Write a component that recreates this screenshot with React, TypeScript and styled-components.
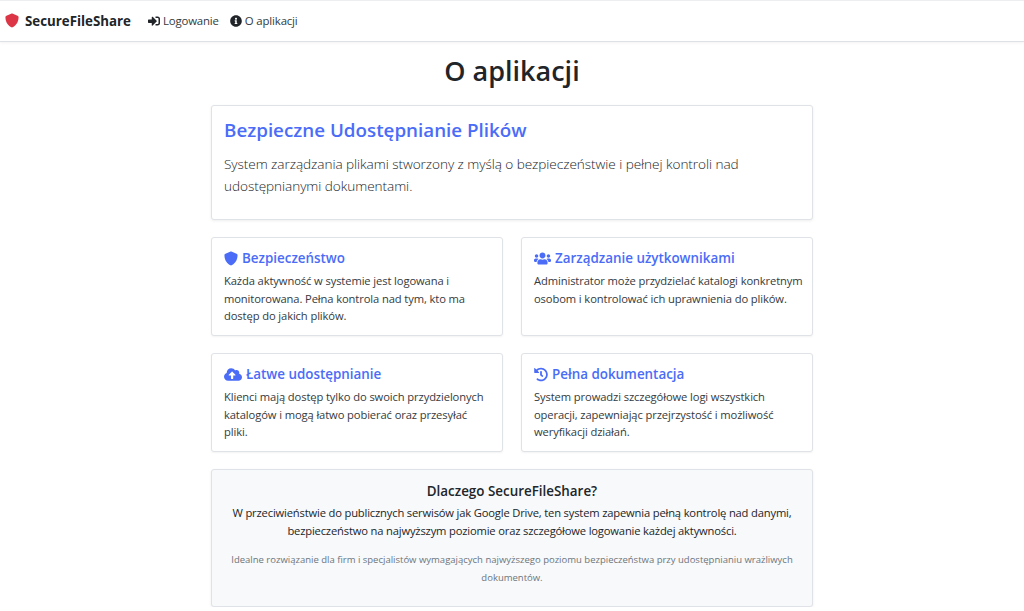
import React from "react";
import styled, { createGlobalStyle } from "styled-components";
import { FaCloudUploadAlt, FaHistory, FaInfoCircle, FaSignInAlt, FaUsers } from "react-icons/fa";
import { FaShield } from "react-icons/fa6";

const GlobalStyle = createGlobalStyle`
  html, body { margin: 0; padding: 0; background: #fff; }
  body {
    font-family: "Open Sans", "Noto Sans", "Liberation Sans", sans-serif;
    color: #212529;
    overflow: hidden;
  }
`;

const Navbar = styled.nav`
  height: 42px;
  box-sizing: border-box;
  border-top: 1px solid #eceef0;
  border-bottom: 1px solid #dee2e6;
  box-shadow: 0 1px 3px rgba(0, 0, 0, 0.05);
  display: flex;
  align-items: center;
  padding: 0 0 1px 5px;
`;

const Brand = styled.a`
  display: flex;
  align-items: center;
  gap: 6px;
  font-size: 13.3px;
  font-weight: 700;
  color: #212529;
  margin-right: 17px;
  svg { color: #dc3545; width: 14px; height: 15px; }
`;

const NavLink = styled.a`
  display: flex;
  align-items: center;
  gap: 3px;
  font-size: 11.4px;
  letter-spacing: -0.15px;
  color: #343a40;
  margin-right: 11px;
  svg { color: #212529; width: 12px; height: 12px; }
`;

const Main = styled.main`
  width: 602px;
  margin: 0 auto;
`;

const PageTitle = styled.h1`
  margin: 10px 0 15px;
  height: 38px;
  line-height: 38px;
  font-size: 27px;
  font-weight: 600;
  text-align: center;
  color: #212529;
`;

const Card = styled.section`
  box-sizing: border-box;
  background: #fff;
  border: 1px solid #dfe2e6;
  border-radius: 3px;
  box-shadow: 0 1px 3px rgba(0, 0, 0, 0.07);
`;

const HeroCard = styled(Card)`
  height: 115px;
  padding: 11px 12px 0;
  margin-bottom: 17px;
`;

const HeroTitle = styled.h2`
  margin: 0 0 10px;
  font-size: 18.8px;
  line-height: 26px;
  font-weight: 600;
  color: #4a6cf7;
`;

const Lead = styled.p`
  margin: 0;
  font-size: 13.6px;
  letter-spacing: -0.06px;
  line-height: 22px;
  font-weight: 300;
  color: #212529;
`;

const FeatureGrid = styled.div`
  display: grid;
  grid-template-columns: 292px 292px;
  grid-auto-rows: 99px;
  column-gap: 18px;
  row-gap: 17px;
  margin-bottom: 17px;
`;

const FeatureCard = styled(Card)`
  padding: 11px 6px 0 12px;
  box-shadow: 0 1px 2px rgba(0, 0, 0, 0.05);
`;

const FeatureTitle = styled.h3<{ $iconWidth: number }>`
  display: flex;
  align-items: center;
  gap: 4px;
  margin: 0 0 4px;
  font-size: 13.4px;
  line-height: 19px;
  font-weight: 600;
  color: #4a6cf7;
  svg { flex: none; width: ${(p) => p.$iconWidth}px; height: 15px; }
`;

const FeatureText = styled.p`
  margin: 0;
  font-size: 11.2px;
  letter-spacing: -0.11px;
  line-height: 17.5px;
  color: #343a40;
  white-space: pre-line;
`;

const WhyCard = styled(Card)`
  height: 138px;
  padding: 11px 12px 0;
  background: #f8f9fa;
  text-align: center;
`;

const WhyTitle = styled.h4`
  margin: 0 0 3px;
  font-size: 13.4px;
  line-height: 20px;
  font-weight: 600;
  color: #212529;
`;

const WhyText = styled.p`
  margin: 0 0 12px;
  font-size: 11.2px;
  letter-spacing: -0.17px;
  line-height: 17.5px;
  color: #212529;
`;

const WhyNote = styled.p`
  margin: 0;
  font-size: 9.5px;
  line-height: 17.5px;
  color: #6c757d;
`;

const features = [
  {
    icon: <FaShield />,
    iconWidth: 14,
    title: "Bezpieczeństwo",
    text: "Każda aktywność w systemie jest logowana i monitorowana. Pełna kontrola nad tym, kto ma dostęp do jakich plików.",
  },
  {
    icon: <FaUsers />,
    iconWidth: 17,
    title: "Zarządzanie użytkownikami",
    text: "Administrator może przydzielać katalogi konkretnym osobom i kontrolować ich uprawnienia do plików.",
  },
  {
    icon: <FaCloudUploadAlt />,
    iconWidth: 18,
    title: "Łatwe udostępnianie",
    text: "Klienci mają dostęp tylko do swoich przydzielonych katalogów i mogą łatwo pobierać oraz przesyłać\npliki.",
  },
  {
    icon: <FaHistory />,
    iconWidth: 14,
    title: "Pełna dokumentacja",
    text: "System prowadzi szczegółowe logi wszystkich operacji, zapewniając przejrzystość i możliwość weryfikacji działań.",
  },
];

export default function App() {
  return (
    <>
      <GlobalStyle />
      <Navbar>
        <Brand>
          <FaShield />
          SecureFileShare
        </Brand>
        <NavLink>
          <FaSignInAlt />
          Logowanie
        </NavLink>
        <NavLink>
          <FaInfoCircle />
          O aplikacji
        </NavLink>
      </Navbar>
      <Main>
        <PageTitle>O aplikacji</PageTitle>
        <HeroCard>
          <HeroTitle>Bezpieczne Udostępnianie Plików</HeroTitle>
          <Lead>
            System zarządzania plikami stworzony z myślą o bezpieczeństwie i pełnej kontroli nad udostępnianymi
            dokumentami.
          </Lead>
        </HeroCard>
        <FeatureGrid>
          {features.map((f) => (
            <FeatureCard key={f.title}>
              <FeatureTitle $iconWidth={f.iconWidth}>
                {f.icon}
                {f.title}
              </FeatureTitle>
              <FeatureText>{f.text}</FeatureText>
            </FeatureCard>
          ))}
        </FeatureGrid>
        <WhyCard>
          <WhyTitle>Dlaczego SecureFileShare?</WhyTitle>
          <WhyText>
            W przeciwieństwie do publicznych serwisów jak Google Drive, ten system zapewnia pełną kontrolę nad danymi,
            bezpieczeństwo na najwyższym poziomie oraz szczegółowe logowanie każdej aktywności.
          </WhyText>
          <WhyNote>
            Idealne rozwiązanie dla firm i specjalistów wymagających najwyższego poziomu bezpieczeństwa przy
            udostępnianiu wrażliwych dokumentów.
          </WhyNote>
        </WhyCard>
      </Main>
    </>
  );
}
